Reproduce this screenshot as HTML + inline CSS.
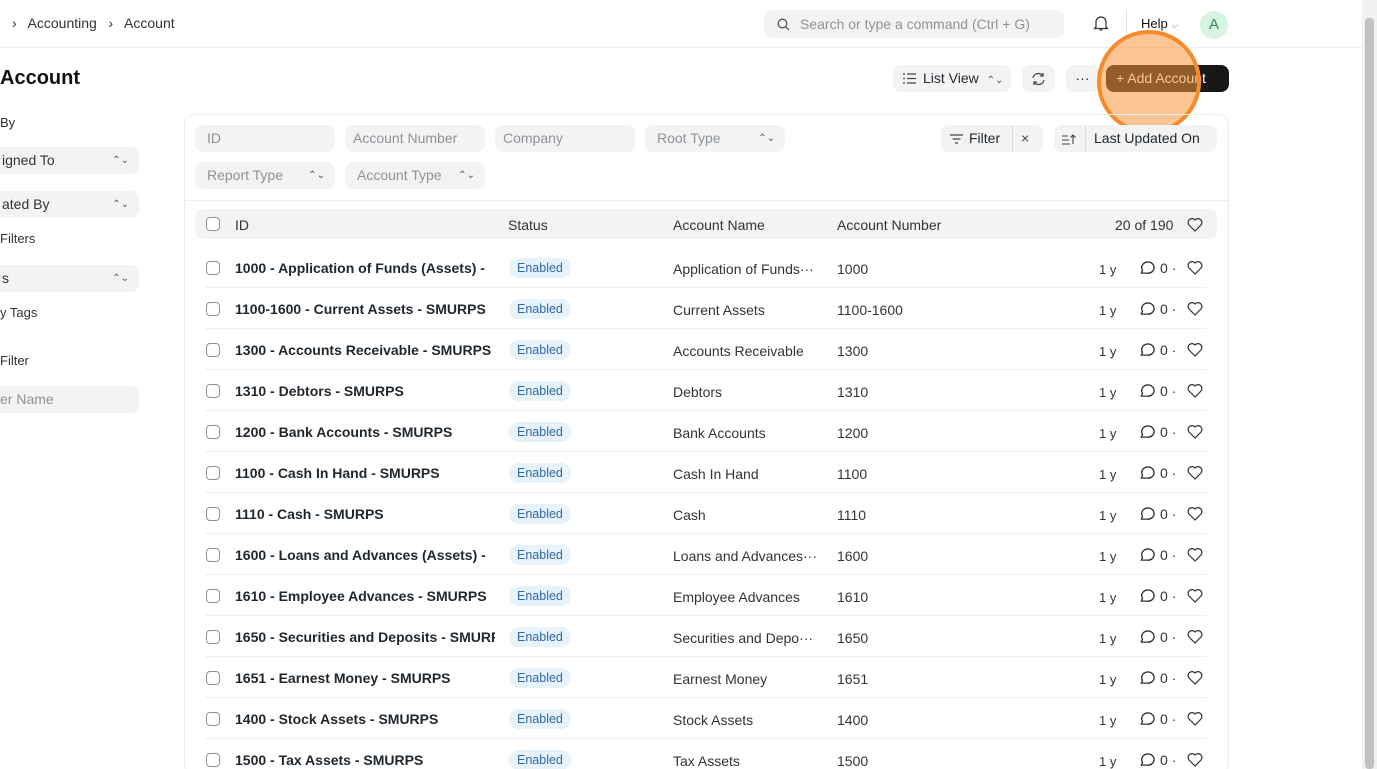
<!DOCTYPE html>
<html><head><meta charset="utf-8"><style>
*{box-sizing:border-box;margin:0;padding:0}
html,body{width:1377px;height:769px;overflow:hidden}
body{background:#fff;font-family:"Liberation Sans",sans-serif;color:#1f272e;position:relative;font-size:14px}
.a{position:absolute;white-space:nowrap}
.sel{position:absolute;background:#f3f3f3;border-radius:8px;height:27px;color:#8d9399;font-size:14px;line-height:27px;padding-left:12px}
.sel .ud{position:absolute;right:10px;top:0;font-size:10px;color:#555}
.btn{position:absolute;background:#f3f3f3;border-radius:8px;height:27px;line-height:27px;font-size:14px;color:#1f272e}
.row{position:absolute;left:205px;width:1002px;height:41px;border-bottom:1px solid #ebeef0}
.cb{position:absolute;width:14px;height:14px;border:1.3px solid #8d9399;border-radius:4px;background:#fff}
.badge{position:absolute;background:#e8f2fb;color:#2e6aa8;font-size:12.5px;border-radius:10px;height:20px;line-height:20px;padding:0 8px}
</style></head><body>
<div class="a" style="left:12px;top:15px;font-size:14px;color:#333">›&nbsp;&nbsp; Accounting &nbsp;&nbsp;›&nbsp;&nbsp; Account</div>
<div class="a" style="left:764px;top:10px;width:300px;height:28px;background:#f3f3f3;border-radius:8px;color:#8d9399;font-size:14px;line-height:28px;padding-left:36px">Search or type a command (Ctrl + G)
<svg style="position:absolute;left:13px;top:8px" width="13" height="13" viewBox="0 0 13 13"><circle cx="5.5" cy="5.5" r="4.3" fill="none" stroke="#555" stroke-width="1.3"/><path d="M8.7 8.7L12 12" stroke="#555" stroke-width="1.3"/></svg></div>
<svg class="a" style="left:1093px;top:15px" width="16" height="17" viewBox="0 0 16 17"><path d="M3 12V7a5 5 0 0110 0v5l1.5 1.5h-13z M6.5 15h3" fill="none" stroke="#333" stroke-width="1.2"/></svg>
<div class="a" style="left:1126px;top:10px;width:1px;height:28px;background:#e2e2e2"></div>
<div class="a" style="left:1141px;top:16px;font-size:13px;color:#111">Help <span style="font-size:9px;color:#666">⌵</span></div>
<div class="a" style="left:1200px;top:11px;width:28px;height:28px;border-radius:50%;background:#d7f4e2;color:#2f8a55;font-size:15px;line-height:28px;text-align:center">A</div>
<div class="a" style="left:0;top:47px;width:1362px;height:1px;background:#ebeef0"></div>
<div class="a" style="left:1362px;top:0;width:15px;height:769px;background:#f1f1f1"></div>
<div class="a" style="left:1365px;top:18px;width:9px;height:751px;background:#c1c1c1;border-radius:4px"></div>
<div class="a" style="left:0;top:67px;font-size:20px;font-weight:bold;color:#111">Account</div>
<div class="btn" style="left:893px;top:65px;width:118px;padding-left:30px">List View <span style="font-size:10px;color:#555;margin-left:4px">⌃⌄</span>
<svg style="position:absolute;left:10px;top:8px" width="13" height="11"><path d="M0 1h2M4 1h9M0 5.5h2M4 5.5h9M0 10h2M4 10h9" stroke="#444" stroke-width="1.2"/></svg></div>
<div class="btn" style="left:1022px;top:65px;width:33px"><svg style="position:absolute;left:9px;top:7px" width="15" height="14" viewBox="0 0 15 14"><path d="M2 6a5.5 5.5 0 0110-2M13 8a5.5 5.5 0 01-10 2M12 1v3h-3M3 13v-3h3" fill="none" stroke="#444" stroke-width="1.2"/></svg></div>
<div class="btn" style="left:1066px;top:65px;width:33px;text-align:center">···</div>
<div class="a" style="left:1106px;top:65px;width:123px;height:27px;background:#171717;border-radius:8px;color:#fff;font-size:14px;line-height:27px;padding-left:10px">+ Add Account</div>
<div class="a" style="left:1097px;top:30px;width:104px;height:104px;border-radius:50%;background:rgba(250,150,60,0.55);border:4px solid #f58b2c"></div>
<div class="a" style="left:0;top:115px;font-size:13px;color:#333">By</div>
<div class="sel" style="left:-10px;top:147px;width:149px;color:#333">igned To<span class="ud">⌃⌄</span></div>
<div class="sel" style="left:-10px;top:191px;width:149px;color:#333">ated By<span class="ud">⌃⌄</span></div>
<div class="a" style="left:0;top:231px;font-size:13px;color:#333">Filters</div>
<div class="sel" style="left:-10px;top:265px;width:149px;color:#333">s<span class="ud">⌃⌄</span></div>
<div class="a" style="left:0;top:305px;font-size:13px;color:#333">y Tags</div>
<div class="a" style="left:0;top:353px;font-size:13px;color:#333">Filter</div>
<div class="sel" style="left:-12px;top:386px;width:151px">er Name</div>
<div class="a" style="left:184px;top:114px;width:1045px;height:660px;border:1px solid #ebeef0;border-radius:10px"></div>
<div class="a" style="left:185px;top:200px;width:1043px;height:1px;background:#ebeef0"></div>
<div class="sel" style="left:195px;top:125px;width:140px">ID</div>
<div class="sel" style="left:345px;top:125px;width:140px;padding-left:8px">Account Number</div>
<div class="sel" style="left:495px;top:125px;width:140px;padding-left:8px">Company</div>
<div class="sel" style="left:645px;top:125px;width:140px">Root Type<span class="ud">⌃⌄</span></div>
<div class="sel" style="left:195px;top:162px;width:140px">Report Type<span class="ud">⌃⌄</span></div>
<div class="sel" style="left:345px;top:162px;width:140px">Account Type<span class="ud">⌃⌄</span></div>
<div class="btn" style="left:941px;top:125px;width:102px;padding-left:28px">Filter<span style="position:absolute;left:71px;top:0;width:1px;height:27px;background:#ddd"></span><span style="position:absolute;left:80px;color:#444">×</span>
<svg style="position:absolute;left:9px;top:9px" width="13" height="10"><path d="M0 1h13M2.5 5h8M5 9h3" stroke="#444" stroke-width="1.2"/></svg></div>
<div class="btn" style="left:1054px;top:125px;width:163px;padding-left:40px">Last Updated On<span style="position:absolute;left:31px;top:0;width:1px;height:27px;background:#ddd"></span>
<svg style="position:absolute;left:8px;top:8px" width="15" height="12"><path d="M0 3h6M0 7h7M0 11h8M11 11V2M8.5 4.5L11 2l2.5 2.5" fill="none" stroke="#444" stroke-width="1.1"/></svg></div>
<div class="a" style="left:195px;top:209px;width:1022px;height:30px;background:#f3f3f3;border-radius:8px"></div>
<div class="cb" style="left:206px;top:217px"></div>
<div class="a" style="left:235px;top:217px;color:#333">ID</div>
<div class="a" style="left:508px;top:217px;color:#333">Status</div>
<div class="a" style="left:673px;top:217px;color:#333">Account Name</div>
<div class="a" style="left:837px;top:217px;color:#333">Account Number</div>
<div class="a" style="left:1115px;top:217px;color:#333">20 of 190</div>
<svg class="a" style="left:1187px;top:217px" width="16" height="15" viewBox="0 0 16 15"><path d="M8 14L2 8A3.6 3.6 0 018 3a3.6 3.6 0 016 5z" fill="none" stroke="#333" stroke-width="1.2"/></svg>
<div id="rows"></div>
<script>
var d=[["1000 - Application of Funds (Assets) -","Application of Funds···","1000"],["1100-1600 - Current Assets - SMURPS","Current Assets","1100-1600"],["1300 - Accounts Receivable - SMURPS","Accounts Receivable","1300"],["1310 - Debtors - SMURPS","Debtors","1310"],["1200 - Bank Accounts - SMURPS","Bank Accounts","1200"],["1100 - Cash In Hand - SMURPS","Cash In Hand","1100"],["1110 - Cash - SMURPS","Cash","1110"],["1600 - Loans and Advances (Assets) -","Loans and Advances···","1600"],["1610 - Employee Advances - SMURPS","Employee Advances","1610"],["1650 - Securities and Deposits - SMURPS","Securities and Depo···","1650"],["1651 - Earnest Money - SMURPS","Earnest Money","1651"],["1400 - Stock Assets - SMURPS","Stock Assets","1400"],["1500 - Tax Assets - SMURPS","Tax Assets","1500"]];
var h="";d.forEach(function(r,i){var y=247+i*41;
h+='<div class="row" style="top:'+y+'px"></div><div class="cb" style="left:206px;top:'+(y+14)+'px"></div>'+
'<div class="a" style="left:235px;top:'+(y+13)+'px;width:260px;overflow:hidden;font-weight:bold;color:#1f272e">'+r[0]+'</div>'+
'<div class="badge" style="left:509px;top:'+(y+11)+'px">Enabled</div>'+
'<div class="a" style="left:673px;top:'+(y+14)+'px;color:#333">'+r[1]+'</div>'+
'<div class="a" style="left:837px;top:'+(y+14)+'px;color:#333">'+r[2]+'</div>'+
'<div class="a" style="left:1099px;top:'+(y+15)+'px;font-size:13px;color:#333">1 y</div>'+
'<svg class="a" style="left:1138px;top:'+(y+12)+'px" width="18" height="17" viewBox="0 0 16 15"><path d="M3 12.5l1-2.5A5.5 5 0 118 12.5z" fill="none" stroke="#333" stroke-width="1.2"/></svg>'+
'<div class="a" style="left:1160px;top:'+(y+13)+'px;color:#333">0 ·</div>'+
'<svg class="a" style="left:1187px;top:'+(y+13)+'px" width="16" height="15" viewBox="0 0 16 15"><path d="M8 14L2 8A3.6 3.6 0 018 3a3.6 3.6 0 016 5z" fill="none" stroke="#333" stroke-width="1.2"/></svg>';});
document.getElementById("rows").innerHTML=h;
</script>
</body></html>
